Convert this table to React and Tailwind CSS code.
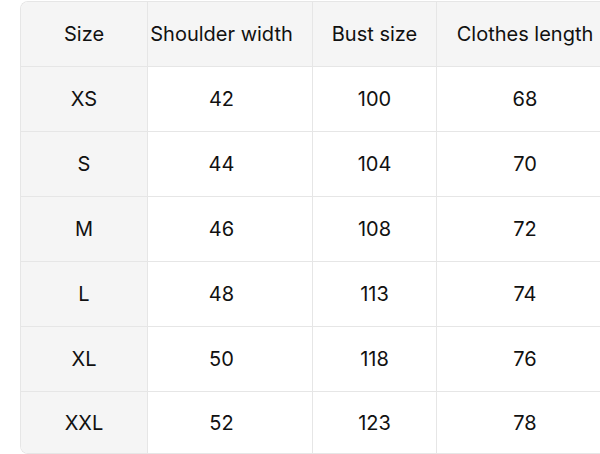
import React from 'react';

const rows = [
  ['XS', '42', '100', '68'],
  ['S', '44', '104', '70'],
  ['M', '46', '108', '72'],
  ['L', '48', '113', '74'],
  ['XL', '50', '118', '76'],
  ['XXL', '52', '123', '78'],
];

const headers = ['Size', 'Shoulder width', 'Bust size', 'Clothes length'];
const widths = ['w-[127px]', 'w-[165px] pr-[17px]', 'w-[124px]', 'w-[176px]'];

export default function App() {
  return (
    <div
      className="w-[600px] h-[454px] overflow-hidden bg-white pt-px pl-5"
      style={{ fontFamily: 'Inter, "Liberation Sans", sans-serif' }}
    >
      <div className="w-[600px] rounded-l-lg border border-r-0 border-[#e6e6e6] overflow-hidden">
        <div className="flex h-[65px] bg-[#f5f5f5] border-b border-[#e6e6e6]">
          {headers.map((h, i) => (
            <div
              key={h}
              className={`${widths[i]} shrink-0 flex items-center justify-center text-[20px] text-[#111111] ${i < 3 ? 'border-r border-[#e6e6e6]' : ''}`}
            >
              {h}
            </div>
          ))}
        </div>
        {rows.map((row, r) => (
          <div
            key={row[0]}
            className={`flex ${r < rows.length - 1 ? 'h-[65px] border-b border-[#e6e6e6]' : 'h-[61px]'}`}
          >
            {row.map((cell, i) => (
              <div
                key={i}
                className={`${widths[i]} shrink-0 flex items-center justify-center text-[20px] text-[#111111] ${i === 0 ? 'bg-[#f5f5f5]' : 'bg-white'} ${i < 3 ? 'border-r border-[#e6e6e6]' : ''}`}
              >
                {cell}
              </div>
            ))}
          </div>
        ))}
      </div>
    </div>
  );
}
